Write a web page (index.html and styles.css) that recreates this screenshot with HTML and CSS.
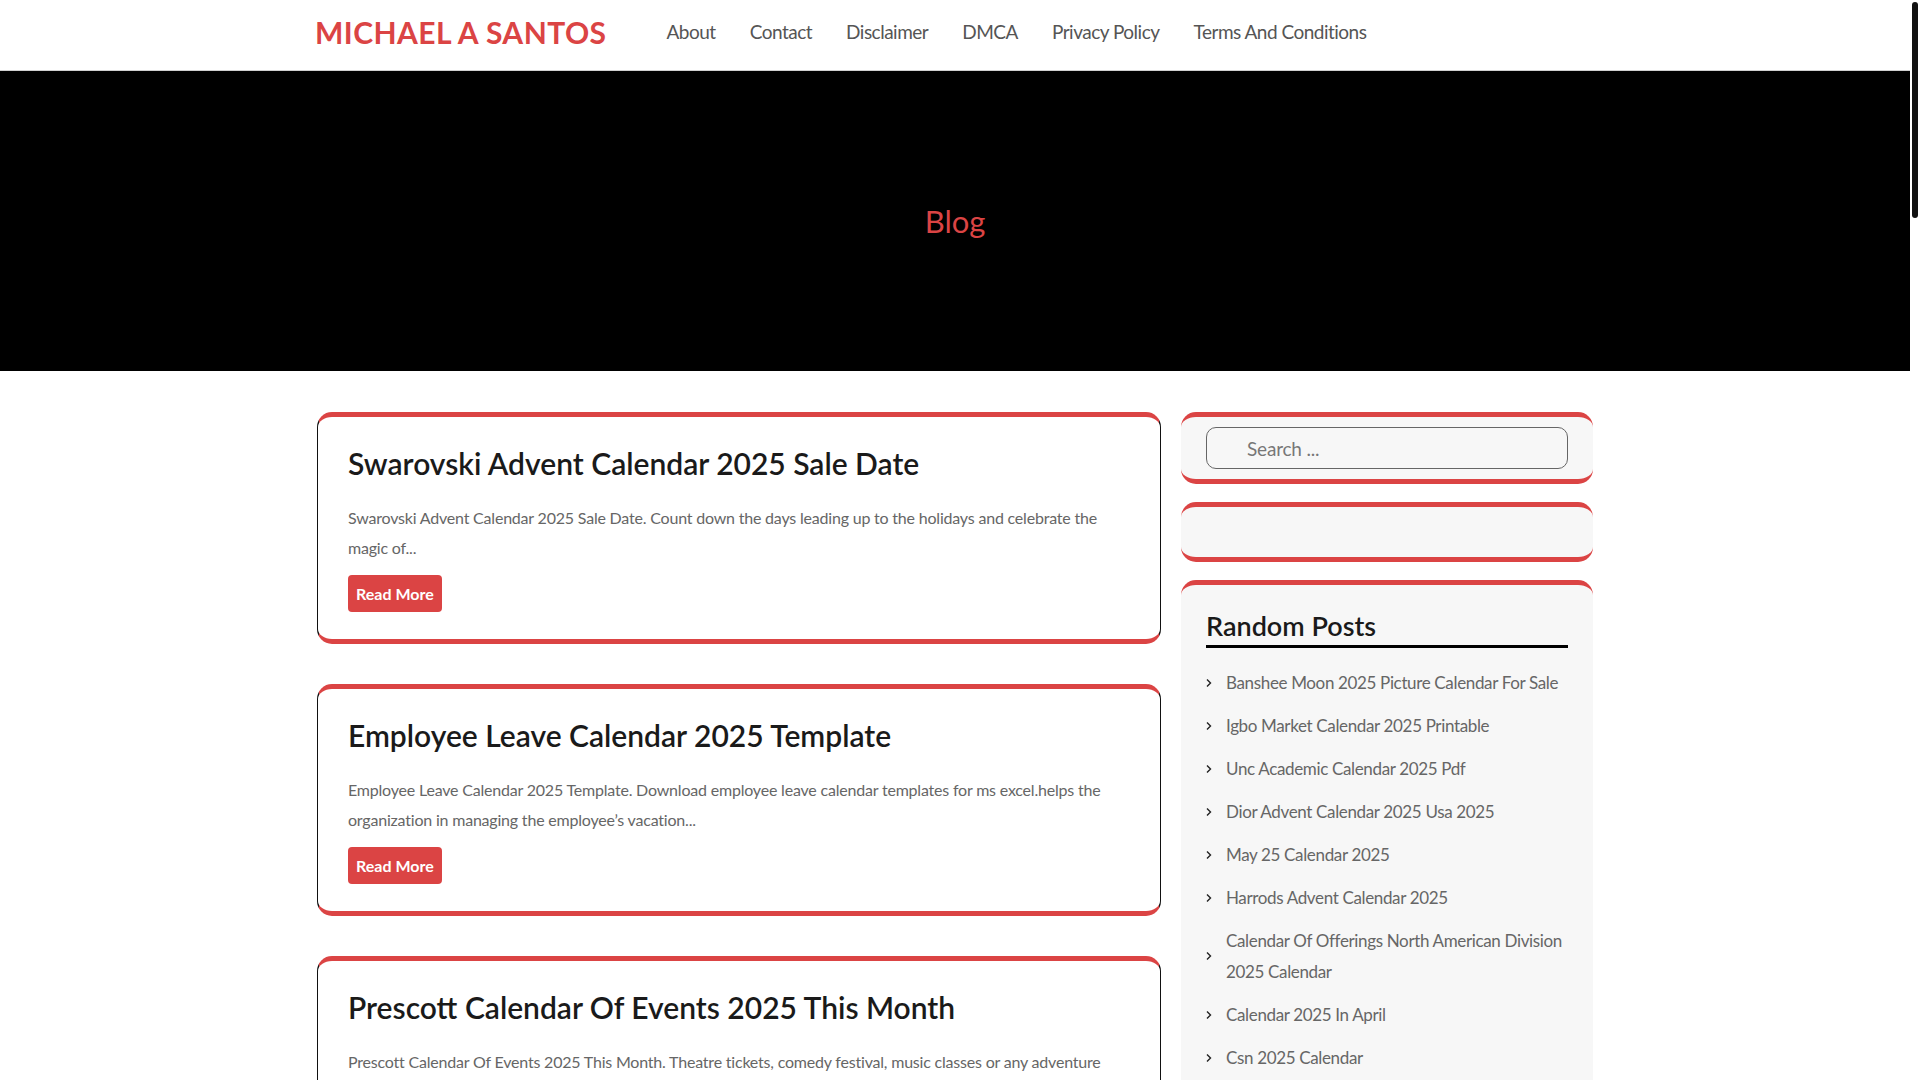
FILE: index.html
```html
<!DOCTYPE html>
<html lang="en">
<head>
<meta charset="utf-8">
<title>Blog - Michael A Santos</title>
<link rel="stylesheet" href="styles.css">
</head>
<body>
<header class="site-header">
  <div class="container header-inner">
    <a class="logo" href="#">MICHAEL A SANTOS</a>
    <nav class="main-nav">
      <a href="#">About</a>
      <a href="#">Contact</a>
      <a href="#">Disclaimer</a>
      <a href="#">DMCA</a>
      <a href="#">Privacy Policy</a>
      <a href="#">Terms And Conditions</a>
    </nav>
  </div>
</header>

<section class="hero">
  <h1 class="hero-title">Blog</h1>
</section>

<div class="container content">
  <main class="posts">
    <article class="card">
      <h2 class="card-title">Swarovski Advent Calendar 2025 Sale Date</h2>
      <p class="card-excerpt">Swarovski Advent Calendar 2025 Sale Date. Count down the days leading up to the holidays and celebrate the magic of...</p>
      <a class="btn" href="#">Read More</a>
    </article>
    <article class="card">
      <h2 class="card-title">Employee Leave Calendar 2025 Template</h2>
      <p class="card-excerpt">Employee Leave Calendar 2025 Template. Download employee leave calendar templates for ms excel.helps the organization in managing the employee’s vacation...</p>
      <a class="btn" href="#">Read More</a>
    </article>
    <article class="card">
      <h2 class="card-title">Prescott Calendar Of Events 2025 This Month</h2>
      <p class="card-excerpt">Prescott Calendar Of Events 2025 This Month. Theatre tickets, comedy festival, music classes or any adventure you are looking for, find it all...</p>
      <a class="btn" href="#">Read More</a>
    </article>
    <article class="card">
      <h2 class="card-title">Banshee Moon 2025 Picture Calendar For Sale</h2>
      <p class="card-excerpt">Banshee Moon 2025 Picture Calendar For Sale. Browse the new calendar with twelve original illustrations, one for every month of the...</p>
      <a class="btn" href="#">Read More</a>
    </article>
    <article class="card">
      <h2 class="card-title">Igbo Market Calendar 2025 Printable</h2>
      <p class="card-excerpt">Igbo Market Calendar 2025 Printable. Keep track of the four market days of the Igbo week with this free printable calendar for the...</p>
      <a class="btn" href="#">Read More</a>
    </article>
    <article class="card">
      <h2 class="card-title">Unc Academic Calendar 2025 Pdf</h2>
      <p class="card-excerpt">Unc Academic Calendar 2025 Pdf. Find important dates for the fall and spring semesters, including registration, holidays and final...</p>
      <a class="btn" href="#">Read More</a>
    </article>
    <article class="card">
      <h2 class="card-title">Dior Advent Calendar 2025 Usa 2025</h2>
      <p class="card-excerpt">Dior Advent Calendar 2025 Usa 2025. Discover the contents of the new beauty advent calendar and where to buy it before it sells...</p>
      <a class="btn" href="#">Read More</a>
    </article>
    <article class="card">
      <h2 class="card-title">May 25 Calendar 2025</h2>
      <p class="card-excerpt">May 25 Calendar 2025. Plan your month with a simple printable calendar that shows every week, holiday and observance of the...</p>
      <a class="btn" href="#">Read More</a>
    </article>
    <article class="card">
      <h2 class="card-title">Harrods Advent Calendar 2025</h2>
      <p class="card-excerpt">Harrods Advent Calendar 2025. The iconic store returns with its festive countdown filled with luxury treats and beauty...</p>
      <a class="btn" href="#">Read More</a>
    </article>
    <article class="card">
      <h2 class="card-title">Calendar Of Offerings North American Division 2025 Calendar</h2>
      <p class="card-excerpt">Calendar Of Offerings North American Division 2025 Calendar. See the schedule of special offerings for each Sabbath of the...</p>
      <a class="btn" href="#">Read More</a>
    </article>
    <article class="card">
      <h2 class="card-title">Calendar 2025 In April</h2>
      <p class="card-excerpt">Calendar 2025 In April. Download a free April calendar with holidays, week numbers and plenty of space for your notes and...</p>
      <a class="btn" href="#">Read More</a>
    </article>
    <article class="card">
      <h2 class="card-title">Csn 2025 Calendar</h2>
      <p class="card-excerpt">Csn 2025 Calendar. View the academic calendar with class start dates, deadlines to add or drop classes and college closures...</p>
      <a class="btn" href="#">Read More</a>
    </article>
    <nav class="pagination">
      <span class="page current">1</span>
      <a class="page" href="#">2</a>
      <a class="page" href="#">3</a>
      <a class="page" href="#">Next</a>
    </nav>
  </main>

  <aside class="sidebar">
    <section class="widget widget-search">
      <form class="search-form">
        <input class="search-field" type="search" placeholder="Search ..." aria-label="Search">
      </form>
    </section>
    <section class="widget widget-empty"></section>
    <section class="widget widget-posts">
      <h3 class="widget-title">Random Posts</h3>
      <ul class="post-list">
        <li><svg class="chev" viewBox="0 0 6 10" width="6" height="10"><polyline points="1,1.5 4.5,5 1,8.5"/></svg><a href="#">Banshee Moon 2025 Picture Calendar For Sale</a></li>
        <li><svg class="chev" viewBox="0 0 6 10" width="6" height="10"><polyline points="1,1.5 4.5,5 1,8.5"/></svg><a href="#">Igbo Market Calendar 2025 Printable</a></li>
        <li><svg class="chev" viewBox="0 0 6 10" width="6" height="10"><polyline points="1,1.5 4.5,5 1,8.5"/></svg><a href="#">Unc Academic Calendar 2025 Pdf</a></li>
        <li><svg class="chev" viewBox="0 0 6 10" width="6" height="10"><polyline points="1,1.5 4.5,5 1,8.5"/></svg><a href="#">Dior Advent Calendar 2025 Usa 2025</a></li>
        <li><svg class="chev" viewBox="0 0 6 10" width="6" height="10"><polyline points="1,1.5 4.5,5 1,8.5"/></svg><a href="#">May 25 Calendar 2025</a></li>
        <li><svg class="chev" viewBox="0 0 6 10" width="6" height="10"><polyline points="1,1.5 4.5,5 1,8.5"/></svg><a href="#">Harrods Advent Calendar 2025</a></li>
        <li><svg class="chev" viewBox="0 0 6 10" width="6" height="10"><polyline points="1,1.5 4.5,5 1,8.5"/></svg><a href="#">Calendar Of Offerings North American Division 2025 Calendar</a></li>
        <li><svg class="chev" viewBox="0 0 6 10" width="6" height="10"><polyline points="1,1.5 4.5,5 1,8.5"/></svg><a href="#">Calendar 2025 In April</a></li>
        <li><svg class="chev" viewBox="0 0 6 10" width="6" height="10"><polyline points="1,1.5 4.5,5 1,8.5"/></svg><a href="#">Csn 2025 Calendar</a></li>
        <li><svg class="chev" viewBox="0 0 6 10" width="6" height="10"><polyline points="1,1.5 4.5,5 1,8.5"/></svg><a href="#">Swarovski Advent Calendar 2025 Sale Date</a></li>
      </ul>
    </section>
  </aside>
</div>

<footer class="site-footer">
  <div class="container footer-inner">Copyright © 2025 Michael A Santos. All rights reserved.</div>
</footer>

<div class="scrollbar" aria-hidden="true"><div class="scrollbar-thumb"></div></div>
</body>
</html>
```

FILE: styles.css
```css
* { box-sizing: border-box; }

html, body {
  margin: 0;
  padding: 0;
}

body {
  font-family: Lato, "Noto Sans", sans-serif;
  color: #666;
  background: #fff;
  margin-right: 10px;
}

a { text-decoration: none; color: inherit; }

.container {
  width: 1276px;
  margin: 0 auto;
}

/* window scrollbar drawn over the right edge */
.scrollbar {
  position: fixed;
  top: 0;
  right: 0;
  width: 10px;
  height: 100vh;
  background: #fff;
  padding: 2px;
}

.scrollbar-thumb {
  width: 6px;
  height: 216px;
  border-radius: 3px;
  background: #111;
}

/* Header */
.site-header {
  height: 71px;
  border-bottom: 1px solid #d0d0d0;
  background: #fff;
}

.header-inner {
  height: 70px;
  display: flex;
  align-items: center;
  padding-bottom: 6px;
}

.logo {
  font-size: 30px;
  line-height: 36px;
  font-weight: 700;
  color: #db4444;
  letter-spacing: 0.45px;
  margin-left: -2px;
}

.main-nav {
  display: flex;
  margin-left: 43px;
}

.main-nav a {
  font-size: 19px;
  line-height: 24px;
  letter-spacing: -0.5px;
  color: #555;
  padding: 0 17px;
}

/* Hero */
.hero {
  height: 300px;
  background: #000;
  display: flex;
  align-items: center;
  justify-content: center;
}

.hero-title {
  margin: 0;
  font-size: 31px;
  line-height: 36px;
  font-weight: 400;
  color: #db4444;
}

/* Content */
.content {
  display: grid;
  grid-template-columns: 844px 412px;
  column-gap: 20px;
  padding-top: 41px;
  align-items: start;
}

.posts {
  display: flex;
  flex-direction: column;
  gap: 40px;
}

.card {
  background: #fff;
  border-top: 5px solid #db4444;
  border-bottom: 5px solid #db4444;
  border-left: 1px solid #111;
  border-right: 1px solid #111;
  border-radius: 15px;
  padding: 28px 45px 27px 30px;
}

.card-title {
  margin: 0 0 22px;
  font-size: 30px;
  line-height: 36px;
  font-weight: 600;
  color: #1a1a1a;
}

.card-excerpt {
  margin: 0 0 12px;
  font-size: 16px;
  line-height: 30px;
  letter-spacing: -0.2px;
  color: #666;
}

.btn {
  display: inline-block;
  background: #db4444;
  color: #fff;
  font-size: 16px;
  font-weight: 700;
  line-height: 37px;
  padding: 0 8px;
  border-radius: 4px;
}

.pagination {
  display: flex;
  gap: 10px;
  margin-bottom: 60px;
}

.page {
  display: inline-block;
  min-width: 40px;
  padding: 0 12px;
  line-height: 40px;
  text-align: center;
  border-radius: 4px;
  background: #f7f7f7;
  color: #333;
  font-size: 16px;
}

.page.current {
  background: #db4444;
  color: #fff;
}

/* Sidebar */
.sidebar {
  display: flex;
  flex-direction: column;
  gap: 18px;
}

.widget {
  background: #f7f7f7;
  border-top: 5px solid #db4444;
  border-bottom: 5px solid #db4444;
  border-radius: 15px;
  padding: 25px;
}

.widget-search {
  padding: 10px 25px;
}

.search-form { margin: 0; }

.search-field {
  display: block;
  width: 100%;
  height: 42px;
  border: 1px solid #666;
  border-radius: 10px;
  background: transparent;
  padding: 0 0 0 40px;
  font-family: inherit;
  font-size: 19px;
  letter-spacing: -0.2px;
  color: #555;
  outline: none;
}

.search-field::placeholder { color: #777; }

.widget-empty {
  height: 60px;
}

.widget-posts {
  padding: 26px 25px 20px;
}

.widget-title {
  margin: 0;
  font-size: 27px;
  line-height: 30px;
  font-weight: 600;
  color: #1a1a1a;
  padding-bottom: 4px;
  border-bottom: 3px solid #000;
}

.post-list {
  list-style: none;
  margin: 13px 0 0;
  padding: 0;
}

.post-list li {
  display: flex;
  align-items: center;
  padding: 6px 0;
  font-size: 17px;
  line-height: 31px;
  letter-spacing: -0.35px;
  color: #666;
}

.chev {
  flex: none;
  width: 6px;
  height: 10px;
  margin-right: 14px;
  fill: none;
  stroke: #222;
  stroke-width: 1.4;
}

/* Footer */
.site-footer {
  background: #000;
  color: #bbb;
  margin-top: 40px;
}

.footer-inner {
  padding: 60px 0;
  font-size: 16px;
  text-align: center;
}
```
